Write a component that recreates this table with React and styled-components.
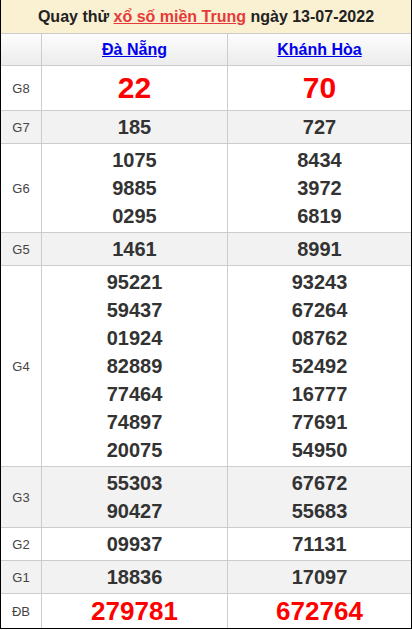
import React from 'react';
import styled, { createGlobalStyle } from 'styled-components';

const GlobalStyle = createGlobalStyle`
    body {
        margin: 0;
        background: #fff;
        font-family: "Liberation Sans", Arial, sans-serif;
    }
`;

const Board = styled.div`
    width: 412px;
    box-sizing: border-box;
    border-left: 1px solid #000;
    border-right: 1px solid #000;
    border-bottom: 1px solid #000;
`;

const Title = styled.div`
    height: 33px;
    line-height: 33px;
    text-align: center;
    font-size: 16px;
    font-weight: bold;
    color: #222;
    background: #faf0d2;
    border-bottom: 1px solid #ccc;

    a {
        color: #e53a3a;
        text-decoration: underline;
    }
`;

const Row = styled.div`
    display: grid;
    grid-template-columns: 41px 186px 1fr;
    background: ${(p) => (p.$shade ? '#f2f2f2' : '#fff')};
    border-bottom: ${(p) => (p.$last ? 'none' : '1px solid #ccc')};
`;

const HeadRow = styled(Row)`
    height: 31px;
    background: linear-gradient(#fdfdfd, #ececec);
`;

const Label = styled.div`
    display: flex;
    align-items: center;
    justify-content: center;
    border-right: 1px solid #ccc;
    font-size: 13px;
    color: #444;
`;

const Cell = styled.div`
    display: flex;
    flex-direction: column;
    align-items: center;
    justify-content: center;
    padding: 2px 0;
    border-right: ${(p) => (p.$end ? 'none' : '1px solid #ccc')};
`;

const Province = styled.a`
    font-size: 16px;
    font-weight: bold;
    color: #0000ee;
    text-decoration: underline;
`;

const Num = styled.span`
    font-weight: bold;
    font-size: ${(p) => p.$size || 20}px;
    line-height: ${(p) => p.$lh || 28}px;
    color: ${(p) => (p.$red ? '#f00' : '#333')};
`;

const prizes = [
    { label: 'G8', a: ['22'], b: ['70'], size: 30, lh: 40, red: true },
    { label: 'G7', a: ['185'], b: ['727'], shade: true },
    { label: 'G6', a: ['1075', '9885', '0295'], b: ['8434', '3972', '6819'] },
    { label: 'G5', a: ['1461'], b: ['8991'], shade: true },
    {
        label: 'G4',
        a: ['95221', '59437', '01924', '82889', '77464', '74897', '20075'],
        b: ['93243', '67264', '08762', '52492', '16777', '77691', '54950'],
    },
    { label: 'G3', a: ['55303', '90427'], b: ['67672', '55683'], shade: true },
    { label: 'G2', a: ['09937'], b: ['71131'] },
    { label: 'G1', a: ['18836'], b: ['17097'], shade: true },
    { label: 'ĐB', a: ['279781'], b: ['672764'], size: 26, lh: 30, red: true, last: true },
];

const Numbers = ({ list, prize }) =>
    list.map((n) => (
        <Num key={n} $size={prize.size} $lh={prize.lh} $red={prize.red}>
            {n}
        </Num>
    ));

export default function App() {
    return (
        <>
            <GlobalStyle />
            <Board>
                <Title>
                    Quay thử <a href="#">xổ số miền Trung</a> ngày 13-07-2022
                </Title>
                <HeadRow>
                    <Label />
                    <Cell>
                        <Province href="#">Đà Nẵng</Province>
                    </Cell>
                    <Cell $end>
                        <Province href="#">Khánh Hòa</Province>
                    </Cell>
                </HeadRow>
                {prizes.map((p) => (
                    <Row key={p.label} $shade={p.shade} $last={p.last}>
                        <Label>{p.label}</Label>
                        <Cell>
                            <Numbers list={p.a} prize={p} />
                        </Cell>
                        <Cell $end>
                            <Numbers list={p.b} prize={p} />
                        </Cell>
                    </Row>
                ))}
            </Board>
        </>
    );
}
